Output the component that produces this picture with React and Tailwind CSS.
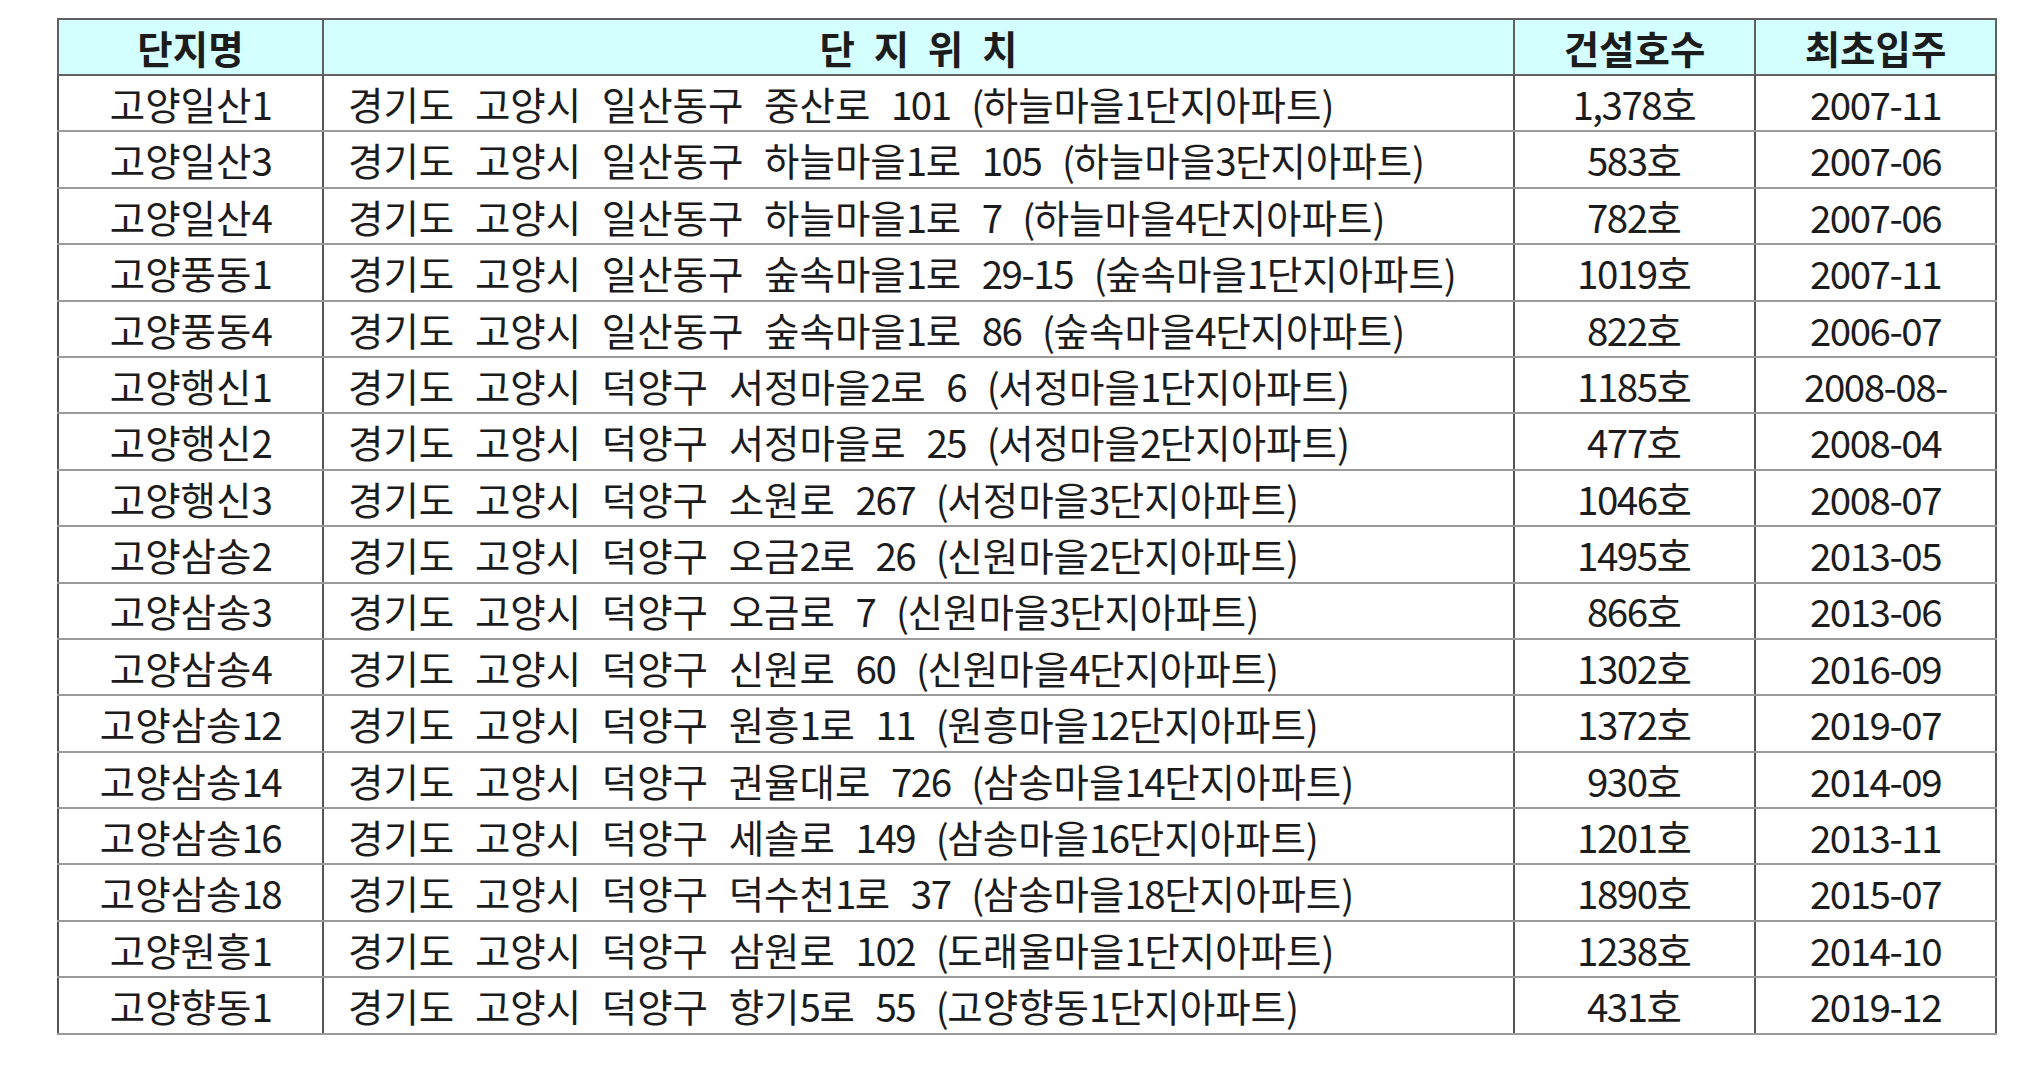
import React from "react";

const rows = [
  ["고양일산1", "경기도 고양시 일산동구 중산로 101 (하늘마을1단지아파트)", "1,378호", "2007-11"],
  ["고양일산3", "경기도 고양시 일산동구 하늘마을1로 105 (하늘마을3단지아파트)", "583호", "2007-06"],
  ["고양일산4", "경기도 고양시 일산동구 하늘마을1로 7 (하늘마을4단지아파트)", "782호", "2007-06"],
  ["고양풍동1", "경기도 고양시 일산동구 숲속마을1로 29-15 (숲속마을1단지아파트)", "1019호", "2007-11"],
  ["고양풍동4", "경기도 고양시 일산동구 숲속마을1로 86 (숲속마을4단지아파트)", "822호", "2006-07"],
  ["고양행신1", "경기도 고양시 덕양구 서정마을2로 6 (서정마을1단지아파트)", "1185호", "2008-08-"],
  ["고양행신2", "경기도 고양시 덕양구 서정마을로 25 (서정마을2단지아파트)", "477호", "2008-04"],
  ["고양행신3", "경기도 고양시 덕양구 소원로 267 (서정마을3단지아파트)", "1046호", "2008-07"],
  ["고양삼송2", "경기도 고양시 덕양구 오금2로 26 (신원마을2단지아파트)", "1495호", "2013-05"],
  ["고양삼송3", "경기도 고양시 덕양구 오금로 7 (신원마을3단지아파트)", "866호", "2013-06"],
  ["고양삼송4", "경기도 고양시 덕양구 신원로 60 (신원마을4단지아파트)", "1302호", "2016-09"],
  ["고양삼송12", "경기도 고양시 덕양구 원흥1로 11 (원흥마을12단지아파트)", "1372호", "2019-07"],
  ["고양삼송14", "경기도 고양시 덕양구 권율대로 726 (삼송마을14단지아파트)", "930호", "2014-09"],
  ["고양삼송16", "경기도 고양시 덕양구 세솔로 149 (삼송마을16단지아파트)", "1201호", "2013-11"],
  ["고양삼송18", "경기도 고양시 덕양구 덕수천1로 37 (삼송마을18단지아파트)", "1890호", "2015-07"],
  ["고양원흥1", "경기도 고양시 덕양구 삼원로 102 (도래울마을1단지아파트)", "1238호", "2014-10"],
  ["고양향동1", "경기도 고양시 덕양구 향기5로 55 (고양향동1단지아파트)", "431호", "2019-12"],
];

const font = { fontFamily: '"Noto Sans CJK KR", "Noto Sans", sans-serif' };

function Txt({ s }) {
  const parts = s.split(/([0-9,\-()]+)/);
  return (
    <>
      {parts.map((p, i) =>
        /^[0-9,\-()]+$/.test(p) ? (
          <span key={i} className="tracking-[-1.5px]">{p}</span>
        ) : (
          <React.Fragment key={i}>{p}</React.Fragment>
        )
      )}
    </>
  );
}

export default function App() {
  const cell = "border-x-2 border-y-2 border-x-[#555555] border-y-[#9a9a9a]";
  return (
    <div className="min-h-screen bg-white pl-[57px] pt-[18px]" style={font}>
      <table className="table-fixed border-collapse border-2 border-[#5c5c5c] text-[#1c1c1c] text-[38.5px] leading-none">
        <colgroup>
          <col className="w-[265px]" />
          <col className="w-[1191px]" />
          <col className="w-[241px]" />
          <col className="w-[241px]" />
        </colgroup>
        <thead>
          <tr className="h-[56px] bg-[#d4ffff]">
            <th className="border-2 border-[#606060] text-center font-bold">단지명</th>
            <th className="border-2 border-[#606060] text-center font-bold [word-spacing:10px]">단 지 위 치</th>
            <th className="border-2 border-[#606060] text-center font-bold">건설호수</th>
            <th className="border-2 border-[#606060] text-center font-bold">최초입주</th>
          </tr>
        </thead>
        <tbody>
          {rows.map((r, i) => (
            <tr key={i} className="h-[56.4px]">
              <td className={`${cell} text-center whitespace-nowrap`}><Txt s={r[0]} /></td>
              <td className={`${cell} pl-[24px] text-left whitespace-nowrap [word-spacing:12px]`}><Txt s={r[1]} /></td>
              <td className={`${cell} text-center whitespace-nowrap`}><Txt s={r[2]} /></td>
              <td className={`${cell} text-center whitespace-nowrap`}><Txt s={r[3]} /></td>
            </tr>
          ))}
        </tbody>
      </table>
    </div>
  );
}
